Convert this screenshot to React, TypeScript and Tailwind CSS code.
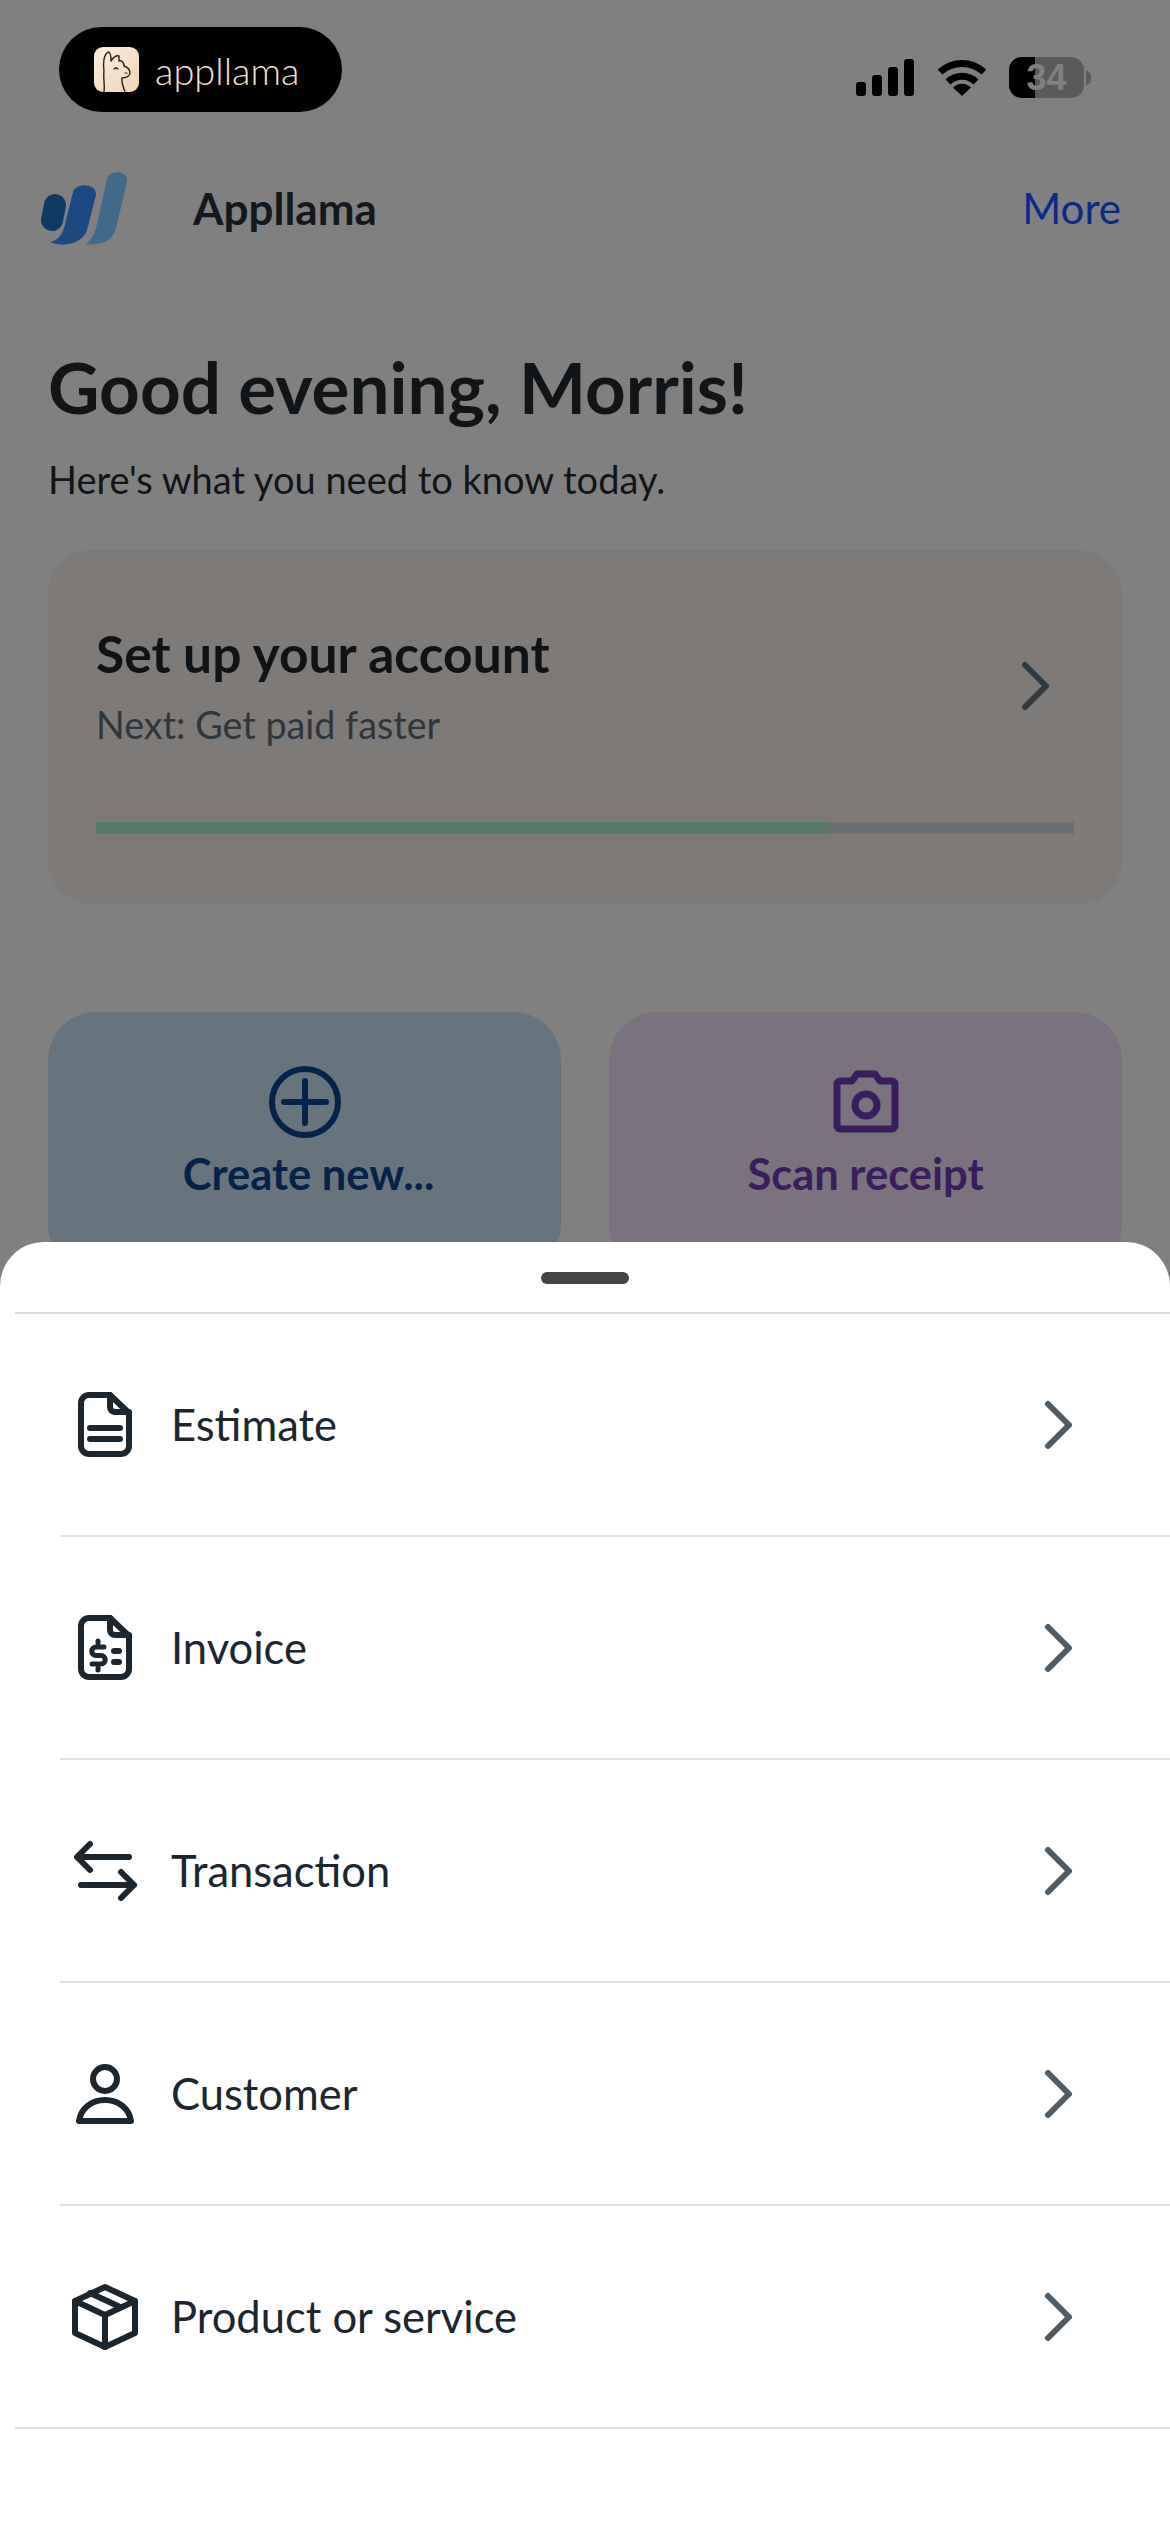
import type { ReactNode } from 'react'

const font = "[font-family:Lato,'Liberation_Sans',sans-serif]"

function Chevron({ className }: { className?: string }) {
  return (
    <svg viewBox="0 0 32 52" className={className} fill="none" stroke="currentColor" strokeWidth="6" strokeLinecap="round" strokeLinejoin="round">
      <path d="M5 5 L26 26 L5 47" />
    </svg>
  )
}

function IconFrame({ children }: { children: ReactNode }) {
  return (
    <svg viewBox="0 0 84 84" className="ml-[3px] h-[84px] w-[84px] shrink-0 text-[#1b262e]" fill="none" stroke="currentColor" strokeWidth="6" strokeLinecap="round" strokeLinejoin="round">
      {children}
    </svg>
  )
}

const docOutline = 'M25 12 H47 L66 30 V63 a8 8 0 0 1 -8 8 H26 a8 8 0 0 1 -8 -8 V20 a8 8 0 0 1 8 -8 Z'

const rows: { label: string; icon: ReactNode }[] = [
  {
    label: 'Estimate',
    icon: (
      <>
        <path d={docOutline} />
        <path d="M47 12 V24 a5 5 0 0 0 5 5 H66" />
        <path d="M27 45 H57 M27 56 H57" />
      </>
    ),
  },
  {
    label: 'Invoice',
    icon: (
      <>
        <path d={docOutline} />
        <path d="M47 12 V24 a5 5 0 0 0 5 5 H66" />
        <path d="M41 41 h-8 a4 4 0 0 0 0 8.5 h5 a4 4 0 0 1 0 8.5 h-9" strokeWidth="5" />
        <path d="M35 35 v2 M35 62 v2" strokeWidth="5" />
        <path d="M51 45 h5 M51 56 h5" />
      </>
    ),
  },
  {
    label: 'Transaction',
    icon: <path d="M66 28 H15 M27 15 L14 28 L27 41 M18 56 H71 M58 43 L71 56 L58 69" />,
  },
  {
    label: 'Customer',
    icon: (
      <>
        <circle cx="42" cy="27" r="12" />
        <path d="M16 69 C18 56 29 48 42 48 C55 48 66 56 68 69 Z" />
      </>
    ),
  },
  {
    label: 'Product or service',
    icon: (
      <>
        <path d="M42 12 L72 26 V58 L42 72 L12 58 V26 Z" />
        <path d="M12 26 L42 40 L72 26 M42 40 V72 M27 18 L57 32" />
      </>
    ),
  },
]

function StatusIcons() {
  return (
    <div className="flex items-start gap-[23px] pt-[32px]">
      <svg viewBox="0 0 58 37" className="h-[37px] w-[58px]" fill="#000">
        <rect x="0" y="23" width="10" height="14" rx="3" />
        <rect x="16" y="16" width="10" height="21" rx="3" />
        <rect x="32" y="8" width="10" height="29" rx="3" />
        <rect x="48" y="0" width="10" height="37" rx="3" />
      </svg>
      <svg viewBox="0 0 50 37" className="h-[37px] w-[50px]" fill="none" stroke="#000" strokeWidth="7">
        <path d="M3 13 A32.5 32.5 0 0 1 47 13" />
        <path d="M11 23 A20 20 0 0 1 39 23" />
        <path d="M25 37 L16 28.5 A12.5 12.5 0 0 1 34 28.5 Z" fill="#000" stroke="none" />
      </svg>
      <div className="-ml-[1px] -mt-[2px] flex items-center">
        <div className="relative flex h-[41px] w-[75px] overflow-hidden rounded-[13px] bg-[#5a5a5a]">
          <div className="h-full w-[26px] bg-black" />
          <span className="absolute inset-0 flex items-center justify-center font-['Liberation_Sans',sans-serif] text-[36px] font-bold leading-none text-[#808080]">34</span>
        </div>
        <div className="ml-[2px] h-[14px] w-[5px] rounded-r-full bg-[#5a5a5a]" />
      </div>
    </div>
  )
}

function AppllamaPill() {
  return (
    <div className="flex h-[85px] w-[283px] items-center gap-[16px] rounded-full bg-black pl-[35px]">
      <svg viewBox="0 0 45 45" className="h-[45px] w-[45px] shrink-0">
        <defs>
          <linearGradient id="tile" x1="0" y1="0" x2="1" y2="1">
            <stop offset="0" stopColor="#fbeee0" />
            <stop offset="1" stopColor="#f0d3b5" />
          </linearGradient>
        </defs>
        <rect width="45" height="45" rx="9" fill="url(#tile)" />
        <path d="M10 45 C11 38 9 30 10 24 C9 16 10 8 14 5 C17 5 17 12 17 14 C19 11 22 8 25 9 L25 14 C28 13 30 16 30 19 C33 20 36 22 36 26 C36 29 32 31 28 31 C27 36 30 41 31 45" fill="none" stroke="#26211d" strokeWidth="1.4" strokeLinejoin="round" />
        <path d="M20 22 q2 -2 4 0 M31 26 h2" fill="none" stroke="#26211d" strokeWidth="1.2" strokeLinecap="round" />
      </svg>
      <span className="font-['Lato',sans-serif] text-[38px] font-light leading-none text-[#f1dfcc]">appllama</span>
    </div>
  )
}

function BrandMark() {
  return (
    <svg viewBox="0 0 90 76" className="h-[76px] w-[90px] shrink-0">
      <path d="M70 9 C72 -1 92 0 90 12 L79 58 C76 70 66 76 49 74 C55 70 58 62 60 54 Z" fill="#3f6a8c" />
      <path d="M36 22 C39 12 60 13 59 25 L50 60 C47 71 30 79 13 72 C24 70 27 60 29 50 Z" fill="#1b4a80" />
      <path d="M18 35 L15 50" stroke="#0f3a63" strokeWidth="22" strokeLinecap="round" fill="none" />
    </svg>
  )
}

export default function App() {
  return (
    <div className={`relative h-[2532px] w-[1170px] overflow-hidden bg-[#808080] ${font}`}>
      <div className="flex items-start justify-between pl-[59px] pr-[79px] pt-[27px]">
        <AppllamaPill />
        <StatusIcons />
      </div>

      <div className="mt-[58px] flex items-center justify-between pl-[37px] pr-[49px]">
        <div className="flex items-center gap-[66px]">
          <BrandMark />
          <span className="text-[44px] font-bold leading-none text-[#12181d]">Appllama</span>
        </div>
        <span className="text-[42px] leading-none text-[#0a2a8a]">More</span>
      </div>

      <div className="px-[48px] pt-[99px]">
        <h1 className="text-[71px] font-bold leading-[84px] text-[#111518]">Good evening, Morris!</h1>
        <p className="mt-[28px] text-[38px] leading-[44px] text-[#111518]">Here's what you need to know today.</p>

        <div className="mt-[49px] h-[354px] rounded-[44px] bg-[#7e7a78] px-[48px] pt-[75px]">
          <div className="flex items-start justify-between pr-[22px]">
            <div>
              <p className="text-[51.5px] font-bold leading-[56px] text-[#0f1316]">Set up your account</p>
              <p className="mt-[22px] text-[37.7px] leading-[44px] text-[#2e363c]">Next: Get paid faster</p>
            </div>
            <Chevron className="mt-[35px] h-[52px] w-[32px] text-[#2e3a3f]" />
          </div>
          <div className="mt-[75px] h-[12px] bg-[#6a6f72]">
            <div className="h-full w-[733px] bg-[#567a66]" />
          </div>
        </div>

        <div className="mt-[108px] grid grid-cols-2 gap-[48px]">
          <div className="flex h-[260px] flex-col items-center rounded-[48px] bg-[#67747e] pt-[54px] text-[#03234b]">
            <svg viewBox="0 0 72 72" className="h-[72px] w-[72px]" fill="none" stroke="currentColor" strokeWidth="6" strokeLinecap="round">
              <circle cx="36" cy="36" r="33" />
              <path d="M36 15 V57 M15 36 H57" />
            </svg>
            <span className="ml-[8px] mt-[11px] text-[43.5px] font-bold leading-[48px]">Create new...</span>
          </div>
          <div className="flex h-[260px] flex-col items-center rounded-[48px] bg-[#7a727e] pt-[54px] text-[#3a1d5e]">
            <svg viewBox="0 0 72 72" className="h-[72px] w-[72px]" fill="none" stroke="currentColor" strokeWidth="7" strokeLinejoin="round">
              <path d="M7 18 a3 3 0 0 1 3 -3 H22 L27 8 H45 L50 15 H62 a3 3 0 0 1 3 3 V60 a3 3 0 0 1 -3 3 H10 a3 3 0 0 1 -3 -3 Z" />
              <circle cx="36" cy="39" r="11" />
            </svg>
            <span className="mt-[11px] text-[43.5px] font-bold leading-[48px]">Scan receipt</span>
          </div>
        </div>
      </div>

      <div className="absolute inset-x-0 bottom-0 h-[1290px] rounded-t-[44px] bg-white">
        <div className="ml-[15px] flex h-[72px] items-start justify-center border-b-2 border-[#d5dde5] pt-[30px]">
          <div className="-ml-[15px] h-[12px] w-[88px] rounded-full bg-[#444444]" />
        </div>
        {rows.map((row, i) => (
          <div
            key={row.label}
            className={`flex h-[223px] items-center border-b-2 pr-[95px] ${i === rows.length - 1 ? 'ml-[15px] border-[#d5dde5] pl-[45px]' : 'ml-[60px] border-[#dde1e6]'}`}
          >
            <IconFrame>{row.icon}</IconFrame>
            <span className="ml-[24px] flex-1 text-[43.5px] leading-none text-[#1b262e]">{row.label}</span>
            <Chevron className="h-[52px] w-[32px] text-[#4d5c66]" />
          </div>
        ))}
      </div>
    </div>
  )
}
